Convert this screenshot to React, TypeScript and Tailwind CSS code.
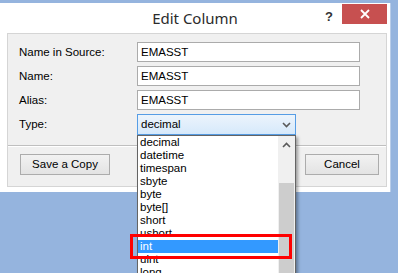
const types = ["decimal", "datetime", "timespan", "sbyte", "byte", "byte[]", "short", "ushort", "int", "uint", "long"];

function Field({ label, value }: { label: string; value: string }) {
  return (
    <>
      <div className="h-[20px] leading-[20px] pl-[1px]">{label}</div>
      <div className="h-[20px] border border-[#ababab] bg-white px-[3px] leading-[18px]">{value}</div>
    </>
  );
}

function Button({ children, className = "" }: { children: React.ReactNode; className?: string }) {
  return (
    <div
      className={
        "h-[21px] flex items-center justify-center border border-[#acacac] bg-gradient-to-b from-[#f2f2f2] to-[#e3e3e3] text-[11.5px] text-black " +
        className
      }
    >
      {children}
    </div>
  );
}

export default function App() {
  return (
    <div
      className="relative w-[398px] h-[273px] overflow-hidden bg-[#95b4de] pt-[3px] text-[11.5px] text-black"
      style={{ fontFamily: '"Liberation Sans", Arial, sans-serif' }}
    >
      <div className="w-[391px] h-[189px] bg-white border-r border-[#b9cde9] flex flex-col">
        {/* title bar */}
        <div className="relative h-[30px] flex items-center justify-center">
          <span
            className="text-[15px] text-[#2b2b2b]"
            style={{ fontFamily: '"Noto Sans", "Open Sans", sans-serif' }}
          >
            Edit Column
          </span>
          <span className="absolute left-[325px] top-[4px] text-[13px] font-bold text-[#333]">?</span>
          <div className="absolute left-[342px] top-[1px] w-[45px] h-[20px] bg-[#c75050] flex items-center justify-center">
            <svg width="10" height="10" viewBox="0 0 10 10">
              <path d="M1 1 L9 9 M9 1 L1 9" stroke="white" strokeWidth="1.8" />
            </svg>
          </div>
        </div>

        {/* content panel */}
        <div className="ml-[7px] w-[380px] h-[154px] border border-[#d5d5d5] bg-[#f0f0f0] flex flex-col">
          <div className="h-[112px] border-b border-[#bfbfbf] pl-[10px] pt-[8px]">
            <div className="grid grid-cols-[119px_223px] gap-y-[4px]">
              <Field label="Name in Source:" value="EMASST" />
              <Field label="Name:" value="EMASST" />
              <Field label="Alias:" value="EMASST" />
              <div className="h-[20px] leading-[20px] pl-[1px]">Type:</div>
              <div className="w-[159px] h-[21px] border border-[#569de5] bg-gradient-to-b from-[#ecf4fc] to-[#d6e9fb] px-[3px] flex items-center justify-between">
                <span>decimal</span>
                <svg width="9" height="6" viewBox="0 0 9 6" className="mr-[1px]">
                  <path d="M1 1 L4.5 4.5 L8 1" fill="none" stroke="#5a5a5a" strokeWidth="1.6" />
                </svg>
              </div>
            </div>
          </div>
          <div className="border-t border-white flex items-start pt-[7px] pl-[12px] pr-[7px]">
            <Button className="w-[90px]">Save a Copy</Button>
            <Button className="ml-[111px] w-[75px] border-[#3c7fb1]">OK</Button>
            <Button className="ml-[9px] w-[74px]">Cancel</Button>
          </div>
        </div>
      </div>

      {/* open dropdown list */}
      <div className="absolute left-[137px] top-[135px] w-[159px] h-[150px] border border-[#646464] bg-white flex shadow-[2px_2px_3px_rgba(0,0,0,0.35)]">
        <div className="flex-1">
          {types.map((t) => (
            <div
              key={t}
              className={
                "h-[13px] leading-[13px] pl-[2px] " + (t === "int" ? "bg-[#3399ff] text-white" : "")
              }
            >
              {t}
            </div>
          ))}
        </div>
        <div className="w-[17px] flex flex-col bg-[#f0f0f0]">
          <div className="h-[17px] flex items-center justify-center">
            <svg width="9" height="6" viewBox="0 0 9 6">
              <path d="M1 5 L4.5 1.5 L8 5" fill="none" stroke="#5a5a5a" strokeWidth="1.6" />
            </svg>
          </div>
          <div className="h-[30px]" />
          <div className="flex-1 mx-[1px] bg-[#cdcdcd]" />
        </div>
      </div>

      {/* highlight marker */}
      <div className="absolute left-[130px] top-[234px] w-[162px] h-[25px] border-[3px] border-[#ff0000]" />
    </div>
  );
}
